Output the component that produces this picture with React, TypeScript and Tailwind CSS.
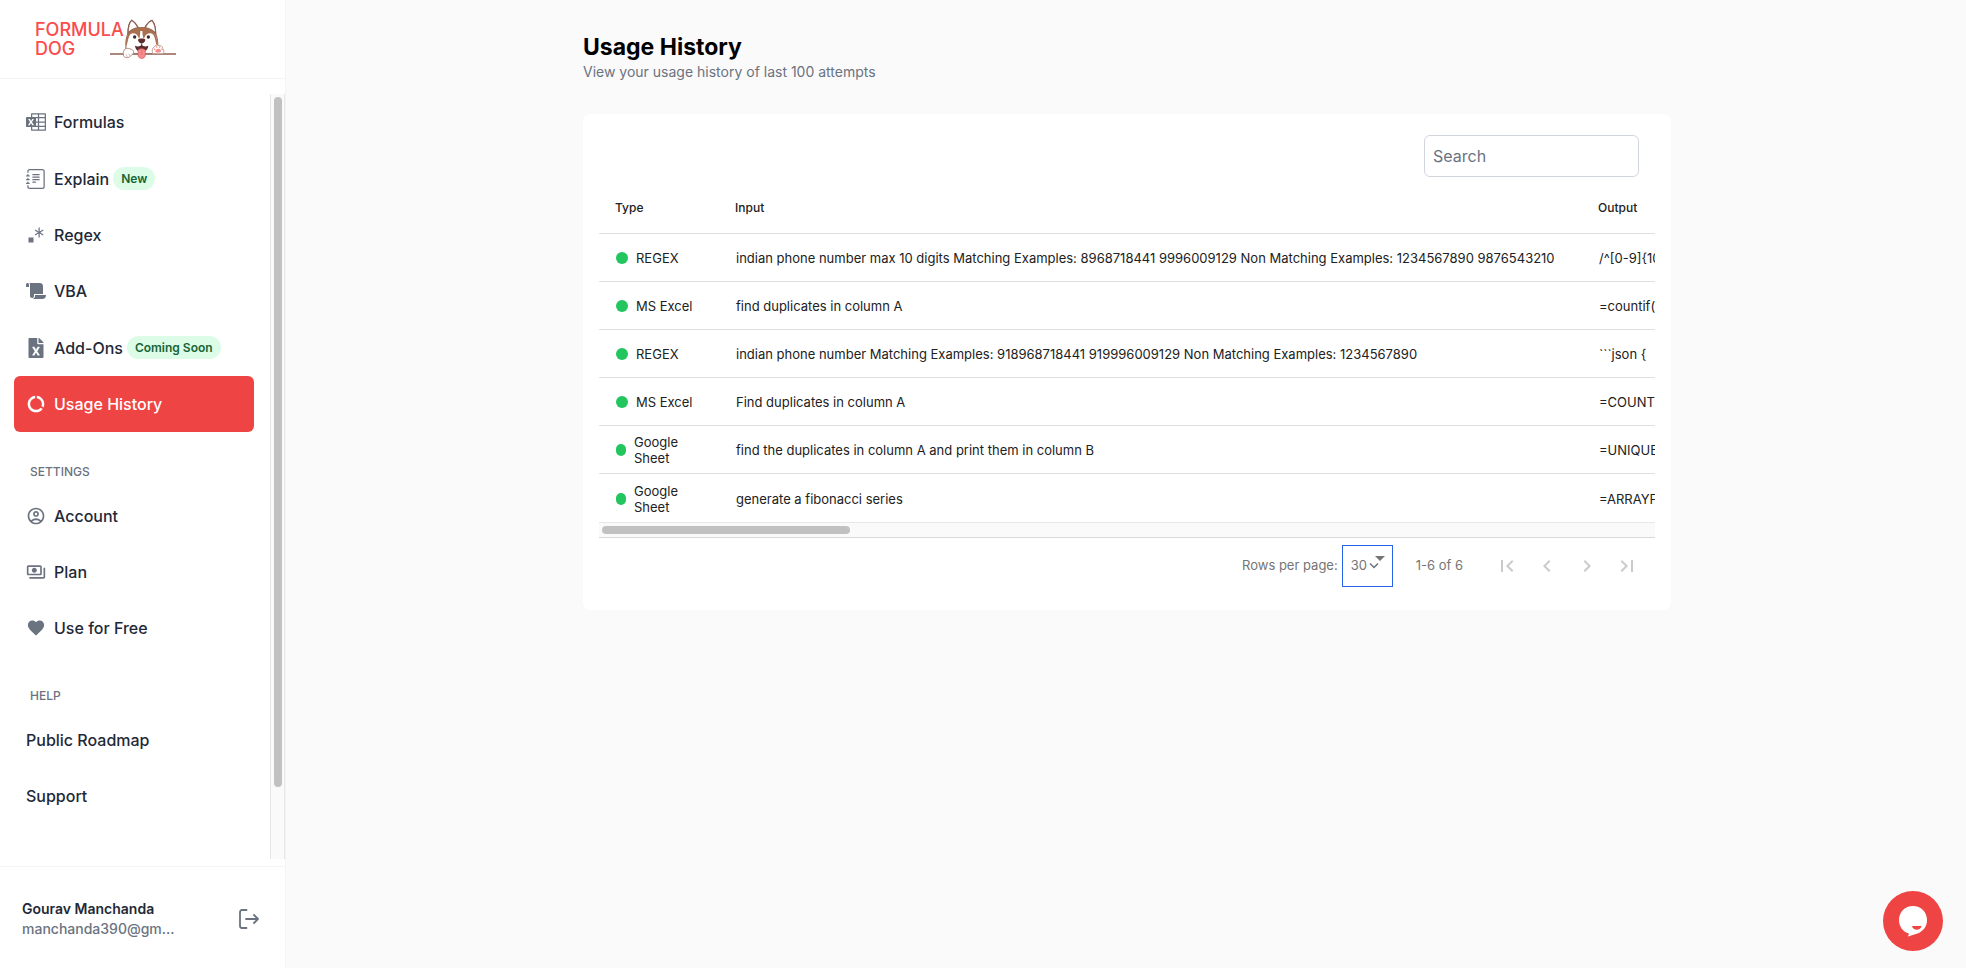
import React from 'react';
import { BsJournalText } from 'react-icons/bs';
import { VscRegex } from 'react-icons/vsc';
import { FaScroll, FaFileExcel } from 'react-icons/fa';
import {
  MdDataUsage,
  MdOutlineAccountCircle,
  MdOutlinePayments,
  MdFirstPage,
  MdChevronLeft,
  MdChevronRight,
  MdLastPage,
} from 'react-icons/md';
import { IoMdHeart } from 'react-icons/io';

type NavItem = {
  label: string;
  icon?: React.ReactNode;
  badge?: string;
  active?: boolean;
};

const ExcelIcon: React.FC = () => (
  <svg width="20" height="20" viewBox="0 0 24 24" fill="currentColor" aria-hidden="true">
    <path d="M23 1.5q.41 0 .7.3.3.29.3.7v19q0 .41-.3.7-.29.3-.7.3H7q-.41 0-.7-.3-.3-.29-.3-.7V18H1q-.41 0-.7-.3-.3-.29-.3-.7V7q0-.41.3-.7Q.58 6 1 6h5V2.5q0-.41.3-.7.29-.3.7-.3zM6 13.28l1.42 2.66h2.14l-2.38-3.87 2.34-3.8H7.46l-1.3 2.4-.05.08-.04.09-.64-1.28-.66-1.29H2.59l2.27 3.82-2.48 3.85h2.16zM14.25 21v-3H7.5v3zm0-4.5v-3.75H12v3.75zm0-5.25V7.5H12v3.75zm0-5.25V3H7.5v3zm8.25 15v-3h-6.75v3zm0-4.5v-3.75h-6.75v3.75zm0-5.25V7.5h-6.75v3.75zm0-5.25V3h-6.75v3Z" />
  </svg>
);

const mainItems: NavItem[] = [
  { label: 'Formulas', icon: <ExcelIcon /> },
  { label: 'Explain', icon: <BsJournalText size={20} />, badge: 'New' },
  { label: 'Regex', icon: <VscRegex size={20} /> },
  { label: 'VBA', icon: <FaScroll size={20} /> },
  { label: 'Add-Ons', icon: <FaFileExcel size={20} />, badge: 'Coming Soon' },
  { label: 'Usage History', icon: <MdDataUsage size={20} />, active: true },
];

const settingsItems: NavItem[] = [
  { label: 'Account', icon: <MdOutlineAccountCircle size={20} /> },
  { label: 'Plan', icon: <MdOutlinePayments size={20} /> },
  { label: 'Use for Free', icon: <IoMdHeart size={20} /> },
];

const helpItems: NavItem[] = [{ label: 'Public Roadmap' }, { label: 'Support' }];

const rows = [
  {
    type: 'REGEX',
    input:
      'indian phone number max 10 digits Matching Examples: 8968718441 9996009129 Non Matching Examples: 1234567890 9876543210',
    output: '/^[0-9]{10}$/',
  },
  { type: 'MS Excel', input: 'find duplicates in column A', output: '=countif(A:A' },
  {
    type: 'REGEX',
    input: 'indian phone number Matching Examples: 918968718441 919996009129 Non Matching Examples: 1234567890',
    output: '```json {',
  },
  { type: 'MS Excel', input: 'Find duplicates in column A', output: '=COUNTIF(' },
  { type: 'Google Sheet', input: 'find the duplicates in column A and print them in column B', output: '=UNIQUE(' },
  { type: 'Google Sheet', input: 'generate a fibonacci series', output: '=ARRAYFORMULA(' },
];

const DogLogo: React.FC = () => (
  <svg width="66" height="40" viewBox="0 0 198 120" fill="none" aria-hidden="true">
    <path d="M0 105H198" stroke="#8f5f52" strokeWidth="4" />
    <path d="M50 104C46 84 46 58 54 44C54 26 58 10 65 4C73 8 80 18 84 26H105C110 16 117 7 126 4C133 12 137 28 137 44C144 58 145 84 142 104Z" fill="#fff" stroke="#8f5f52" strokeWidth="3" />
    <path d="M54 44C54 26 58 10 65 4C73 8 80 18 84 26C70 29 60 35 54 44Z" fill="#fff" stroke="#8f5f52" strokeWidth="4" />
    <path d="M137 44C137 28 133 12 126 4C117 7 110 16 105 26C120 29 130 35 137 44Z" fill="#fff" stroke="#8f5f52" strokeWidth="4" />
    <path d="M48 82C46 44 62 25 95 25C128 25 144 44 142 82C137 76 137 58 130 47C122 40 108 42 103 56C100 62 98 52 97 36H91C90 52 89 62 86 56C81 42 68 40 60 47C53 58 53 76 48 82Z" fill="#a86f50" />
    <path d="M142 78C145 88 144 96 141 103" stroke="#8f5f52" strokeWidth="4" />
    <circle cx="74" cy="54" r="5" fill="#3b2a2a" />
    <circle cx="115" cy="54" r="5" fill="#3b2a2a" />
    <path d="M84 62C84 57 106 57 106 62C106 69 99 73 95 73C91 73 84 69 84 62Z" fill="#5b2d2d" />
    <path d="M95 73V80" stroke="#5b2d2d" strokeWidth="3" />
    <path d="M75 80C84 84 90 82 95 77C100 82 106 84 115 80C113 92 107 98 95 98C83 98 77 92 75 80Z" fill="#5b2d2d" />
    <path d="M84 94C86 88 104 88 106 94V108C106 122 84 122 84 108Z" fill="#f78a8a" stroke="#c25f62" strokeWidth="2" />
    <path d="M95 94V108" stroke="#d76d70" strokeWidth="2" />
    <path d="M42 96C42 88 54 86 60 90C68 90 73 98 70 104C66 106 64 110 58 114C50 118 42 116 40 108C39 102 40 98 42 96Z" fill="#fff" stroke="#9c7468" strokeWidth="2.5" />
    <path d="M48 106L52 114M56 104L60 111" stroke="#9c7468" strokeWidth="1.5" />
    <path d="M128 104C125 94 127 86 133 84C136 77 144 77 147 80C153 78 158 83 158 88C163 92 162 98 160 104Z" fill="#fff" stroke="#b98f8a" strokeWidth="2.5" />
    <path d="M136 98C136 92 141 89 145 89C150 89 154 93 153 98C151 101 138 101 136 98Z" fill="#f78a8a" />
    <circle cx="134" cy="91" r="2.5" fill="#f78a8a" />
    <circle cx="140" cy="84" r="2.5" fill="#f78a8a" />
    <circle cx="149" cy="84" r="2.5" fill="#f78a8a" />
    <circle cx="156" cy="91" r="2.5" fill="#f78a8a" />
  </svg>
);

const NavLink: React.FC<{ item: NavItem }> = ({ item }) => (
  <a
    href="#"
    className={
      item.active
        ? 'flex h-14 items-center rounded-md bg-[#ef4444] px-3 font-medium text-white'
        : item.badge
          ? 'flex h-[57px] items-center rounded-md px-3 font-medium text-[#1f2937]'
          : 'flex h-14 items-center rounded-md px-3 font-medium text-[#1f2937]'
    }
  >
    {item.icon && (
      <span className={item.active ? 'mr-2 flex w-5 justify-center text-white' : 'mr-2 flex w-5 justify-center text-[#6b7280]'}>
        {item.icon}
      </span>
    )}
    {item.label}
    {item.badge && (
      <span className="ml-1 rounded-full bg-[#dcfce7] px-2 text-xs leading-[23px] font-semibold text-[#166534]">
        {item.badge}
      </span>
    )}
  </a>
);

const NavHeading: React.FC<{ children: React.ReactNode }> = ({ children }) => (
  <h2 className="mt-8 mb-2 pl-4 text-xs font-medium text-[#6b7280] uppercase">{children}</h2>
);

const Sidebar: React.FC = () => (
  <aside className="flex w-[286px] shrink-0 flex-col border-r border-gray-100 bg-white">
    <div className="flex h-[79px] items-center border-b border-gray-100 pl-[35px]">
      <div className="text-lg leading-[19px] font-medium text-[#fb4b4b]">
        FORMULA
        <br />
        DOG
      </div>
      <div className="-ml-3.5">
        <DogLogo />
      </div>
    </div>

    <div className="mt-[15px] mb-[7px] flex min-h-0 flex-1">
      <nav className="flex-1 overflow-hidden pr-4 pl-3.5">
        {mainItems.map((item) => (
          <NavLink key={item.label} item={item} />
        ))}
        <NavHeading>Settings</NavHeading>
        {settingsItems.map((item) => (
          <NavLink key={item.label} item={item} />
        ))}
        <NavHeading>Help</NavHeading>
        {helpItems.map((item) => (
          <NavLink key={item.label} item={item} />
        ))}
      </nav>
      <div className="w-[15px] border-x border-gray-200 bg-[#fafafa] px-[3px] py-[3px]">
        <div className="h-10/11 w-2 rounded-full bg-[#c1c1c1]" />
      </div>
    </div>

    <div className="flex h-[102px] items-center justify-between border-t border-gray-100 pt-0.5 pr-[26px] pl-[22px]">
      <div className="text-sm">
        <p className="font-semibold text-[#1f2937]">Gourav Manchanda</p>
        <p className="font-medium text-[#6b7280]">manchanda390@gm...</p>
      </div>
      <button type="button" aria-label="Log out" className="text-[#6b7280]">
        <svg width="20" height="20" viewBox="0 0 20 20" fill="none" stroke="currentColor" strokeWidth="1.8" strokeLinecap="round" strokeLinejoin="round">
          <path d="M7.5 1H3a2 2 0 0 0-2 2v14a2 2 0 0 0 2 2h4.5M7 10h12M15 6l4 4-4 4" />
        </svg>
      </button>
    </div>
  </aside>
);

const HistoryTable: React.FC = () => (
  <div>
    <div className="overflow-hidden">
      <table className="w-[4440px] table-fixed text-left text-[13px] leading-4 text-[#212121]">
        <thead>
          <tr className="h-[52px] border-b border-[#dfdfdf] text-xs">
            <th className="w-[120px] px-4 pt-0.5 font-medium">Type</th>
            <th className="w-[863px] px-4 pt-0.5 font-medium">Input</th>
            <th className="px-4 pt-0.5 font-medium">Output</th>
          </tr>
        </thead>
        <tbody>
          {rows.map((row, i) => (
            <tr key={i} className="h-12 border-b border-[#dfdfdf] last:h-[49px] last:border-0">
              <td className="pt-0.5 pr-4 pl-[17px]">
                <div className="flex items-center">
                  <span className="mr-2 h-3 w-3 rounded-full bg-[#22c55e]" />
                  <span>{row.type}</span>
                </div>
              </td>
              <td className="pt-0.5 pr-4 pl-[17px] whitespace-nowrap">{row.input}</td>
              <td className="pt-0.5 pr-4 pl-[17px] whitespace-nowrap">{row.output}</td>
            </tr>
          ))}
        </tbody>
      </table>
    </div>
    <div className="h-4 border-t border-b border-t-[#e8e8e8] border-b-[#d9d9d9] bg-[#fafafa] px-[3px] py-[3px]">
      <div className="h-2 w-[23.6%] rounded-full bg-[#c1c1c1]" />
    </div>
  </div>
);

const Pagination: React.FC = () => (
  <div className="flex h-14 items-center justify-end pr-2 text-[13px] text-[#757575]">
    <label htmlFor="rows-per-page">Rows per page:</label>
    <div className="relative ml-1">
      <select
        id="rows-per-page"
        defaultValue="30"
        className="h-[42px] w-[51px] appearance-none border border-[#2563eb] bg-white pl-2 focus:outline-none"
      >
        <option value="30">30</option>
      </select>
      <svg className="pointer-events-none absolute top-2.5 right-2 h-4 w-4" viewBox="0 0 16 16" fill="none">
        <path d="M6 1H16L11 6Z" fill="#757575" />
        <path d="M1 8.5L5 12.5L9 8.5" stroke="#6b7280" strokeWidth="1.5" />
      </svg>
    </div>
    <span className="mr-6 ml-[23px]">1-6 of 6</span>
    <div className="flex text-[#cacaca]">
      <button type="button" aria-label="First page" className="flex h-10 w-10 items-center justify-center" disabled>
        <MdFirstPage size={24} />
      </button>
      <button type="button" aria-label="Previous page" className="flex h-10 w-10 items-center justify-center" disabled>
        <MdChevronLeft size={24} />
      </button>
      <button type="button" aria-label="Next page" className="flex h-10 w-10 items-center justify-center" disabled>
        <MdChevronRight size={24} />
      </button>
      <button type="button" aria-label="Last page" className="flex h-10 w-10 items-center justify-center" disabled>
        <MdLastPage size={24} />
      </button>
    </div>
  </div>
);

const ChatButton: React.FC = () => (
  <button
    type="button"
    aria-label="Open chat"
    className="fixed right-[23px] bottom-[17px] flex h-15 w-15 items-center justify-center rounded-full bg-[#ef4444]"
  >
    <svg width="30" height="32" viewBox="0 0 30 32" aria-hidden="true">
      <path d="M15 1C23 1 29 7 29 15C29 21 26 25 21 28L10 31.5L11 28.5C5 27 1 21.5 1 15C1 7 7 1 15 1Z" fill="#fff" />
      <path d="M14 21H23.5C22.5 26 15 26 14 21Z" fill="#ef4444" />
    </svg>
  </button>
);

const App: React.FC = () => (
  <div className="flex h-screen bg-[#fafafa] font-['Inter',sans-serif]">
    <Sidebar />

    <main className="flex-1 overflow-auto pl-0.5">
      <div className="mx-auto max-w-6xl px-8 pt-8">
        <h1 className="text-[23px] leading-[30px] font-bold text-black">Usage History</h1>
        <p className="text-sm text-[#6b7280]">View your usage history of last 100 attempts</p>

        <section className="mt-8 rounded-lg bg-white p-4">
          <div className="flex justify-end pt-[5px] pr-4 pb-1">
            <input
              type="text"
              placeholder="Search"
              aria-label="Search"
              className="h-[42px] w-[215px] rounded-md border border-gray-300 px-2 text-base placeholder:text-[#6b7280]"
            />
          </div>
          <HistoryTable />
          <Pagination />
        </section>
      </div>
    </main>

    <ChatButton />
  </div>
);

export default App;
